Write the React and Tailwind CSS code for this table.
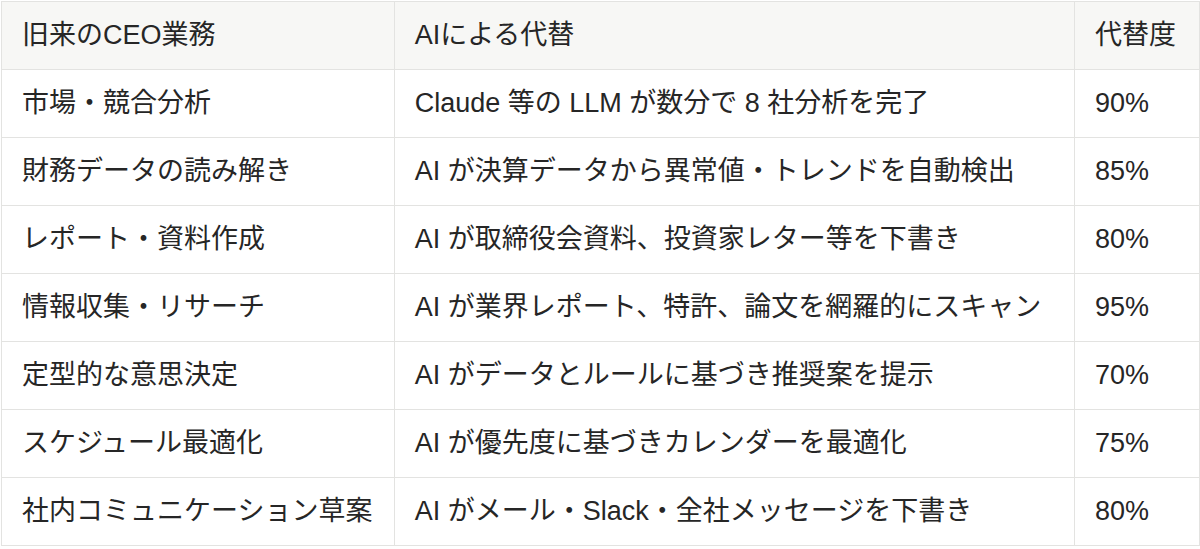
export default function App() {
  const rows = [
    ["市場・競合分析", "Claude 等の LLM が数分で 8 社分析を完了", "90%"],
    ["財務データの読み解き", "AI が決算データから異常値・トレンドを自動検出", "85%"],
    ["レポート・資料作成", "AI が取締役会資料、投資家レター等を下書き", "80%"],
    ["情報収集・リサーチ", "AI が業界レポート、特許、論文を網羅的にスキャン", "95%"],
    ["定型的な意思決定", "AI がデータとルールに基づき推奨案を提示", "70%"],
    ["スケジュール最適化", "AI が優先度に基づきカレンダーを最適化", "75%"],
    ["社内コミュニケーション草案", "AI がメール・Slack・全社メッセージを下書き", "80%"],
  ];
  const font = { fontFamily: '"Liberation Sans", "Noto Sans CJK JP", sans-serif' };
  return (
    <div className="w-[1200px] h-[549px] bg-white pt-px pl-px overflow-hidden" style={font}>
      <table className="border-collapse text-[27px] text-[#262626] leading-none">
        <colgroup>
          <col className="w-[393px]" />
          <col className="w-[681px]" />
          <col className="w-[126px]" />
        </colgroup>
        <thead>
          <tr className="h-[68px] bg-[#f7f7f5]">
            <th className="border border-[#e3e3e1] pl-5 pr-2 text-left font-normal">旧来のCEO業務</th>
            <th className="border border-[#e3e3e1] pl-5 pr-2 text-left font-normal">AIによる代替</th>
            <th className="border border-[#e3e3e1] pl-5 pr-2 text-left font-normal">代替度</th>
          </tr>
        </thead>
        <tbody>
          {rows.map((r, i) => (
            <tr key={i} className="h-[68px]">
              <td className="border border-[#e3e3e1] pl-5 pr-2 whitespace-nowrap">{r[0]}</td>
              <td className="border border-[#e3e3e1] pl-5 pr-2 whitespace-nowrap">{r[1]}</td>
              <td className="border border-[#e3e3e1] pl-5 pr-2 whitespace-nowrap">{r[2]}</td>
            </tr>
          ))}
        </tbody>
      </table>
    </div>
  );
}
